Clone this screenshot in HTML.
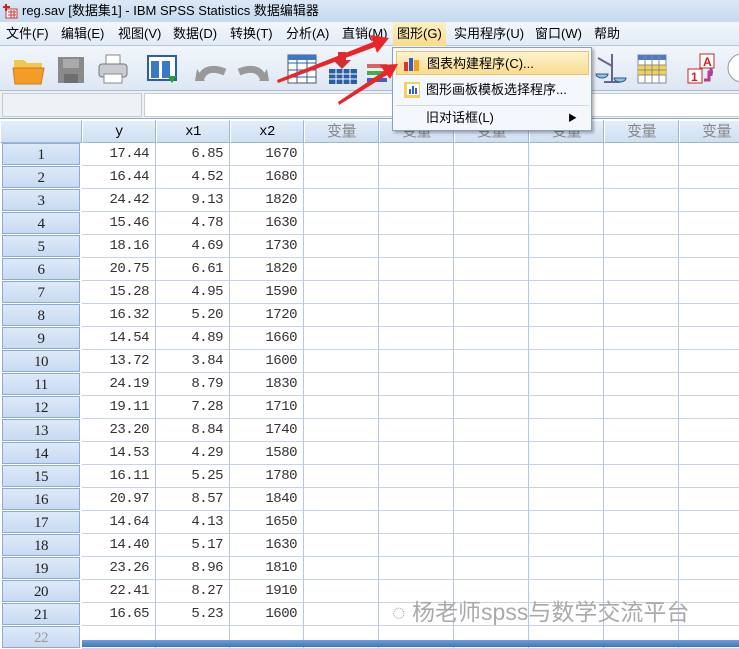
<!DOCTYPE html>
<html><head><meta charset="utf-8"><style>
*{margin:0;padding:0;box-sizing:border-box}
body{width:739px;height:647px;overflow:hidden;background:#fff;font-family:"Liberation Sans","Noto Sans CJK SC",sans-serif;position:relative}
.title{position:absolute;left:0;top:0;width:739px;height:22px;background:linear-gradient(#dbe8f6,#c6d9ee);font-size:13px;line-height:22px;padding-left:22px;color:#000}
.menu{position:absolute;left:0;top:22px;width:739px;height:24px;background:linear-gradient(#f3f7fc,#e2ebf6);border-bottom:1px solid #b6c8de;font-size:13px;line-height:24px}
.menu span{position:absolute;top:0}
.tool{position:absolute;left:0;top:46px;width:739px;height:45px;background:linear-gradient(#f2f6fb,#dde7f3);border-bottom:1px solid #a9bcd3}
.edit{position:absolute;left:0;top:91px;width:739px;height:28px;background:#f0f0f0;border-bottom:1px solid #8ea9c9}
.grid{position:absolute;left:0;top:120px}
.c{position:absolute;height:23px;border-right:1px solid #b5c8e0;border-bottom:1px solid #c5d4e6;font-family:"Liberation Mono","Noto Sans CJK SC",monospace;font-size:14px;line-height:22px;text-align:right;padding-right:6px;color:#333;letter-spacing:-0.5px}
.h{background:linear-gradient(#e4eefa,#cfdff2);text-align:center;padding:0;border:1px solid #fff;border-right-color:#9fb6d3;border-bottom-color:#9fb6d3;color:#000}
.r{background:linear-gradient(#dde9f8,#c8daf2);text-align:center;padding:0;border:1px solid #8eabd1;left:2px;width:78px;color:#222;font-family:"Liberation Serif",serif;font-size:15px}
.v{color:#888;font-family:"Liberation Sans","Noto Sans CJK SC",sans-serif;font-size:15px}
.dd{position:absolute;left:392px;top:47px;width:200px;height:84px;background:#f4f7fb;border:1px solid #8aa0bd;box-shadow:2px 2px 3px rgba(0,0,0,.3);font-size:13px}
.dd div{position:absolute;left:3px;width:193px;height:24px;line-height:24px;padding-left:30px}
</style></head><body>
<div class="title"><svg style="position:absolute;left:2px;top:3px" width="16" height="16"><rect x="4" y="6" width="11" height="9" fill="#fff" stroke="#c33"/><path d="M1 4h7M4 1v7" stroke="#c22" stroke-width="2"/><path d="M6 9h8M6 12h8M9 7v8M12 7v8" stroke="#c33"/></svg>reg.sav [数据集1] - IBM SPSS Statistics 数据编辑器</div>
<div class="menu">
<span style="left:6px">文件(F)</span><span style="left:61px">编辑(E)</span><span style="left:118px">视图(V)</span><span style="left:173px">数据(D)</span><span style="left:230px">转换(T)</span><span style="left:286px">分析(A)</span><span style="left:342px">直销(M)</span>
<span style="left:393px;width:53px;background:linear-gradient(#fdf0c4,#f8dc8a);padding-left:4px">图形(G)</span><span style="left:454px">实用程序(U)</span><span style="left:535px">窗口(W)</span><span style="left:594px">帮助</span></div>
<div class="tool">
<svg width="739" height="45">
<path d="M14 14h10l3 3h15v6H14z" fill="#f3c650"/><path d="M13 22h31l-3 16H15z" fill="#f39c28" stroke="#d07a10"/>
<rect x="58" y="11" width="26" height="26" fill="#8a8a8a"/><rect x="63" y="13" width="16" height="9" fill="#aaa"/><rect x="64" y="28" width="14" height="9" fill="#6e6e6e"/>
<rect x="106" y="9" width="14" height="10" fill="#fff" stroke="#888"/><rect x="99" y="18" width="28" height="13" rx="3" fill="#c8ccd2" stroke="#777"/><rect x="104" y="28" width="18" height="9" fill="#fff" stroke="#888"/>
<rect x="148" y="10" width="28" height="24" fill="#fff" stroke="#2a5ea8" stroke-width="2"/><rect x="151" y="15" width="8" height="17" fill="#3a78c8"/><rect x="162" y="15" width="8" height="17" fill="#3a78c8"/><path d="M167 30h10l-5 7z" fill="#2ca02c"/>
<path d="M200 34 q5 -16 25 -8" stroke="#999" stroke-width="7" fill="none"/><path d="M197 23l8 12h-10z" fill="#999"/>
<path d="M264 34 q-5 -16 -25 -8" stroke="#999" stroke-width="7" fill="none"/><path d="M267 23l-8 12h10z" fill="#999"/>
<rect x="288" y="9" width="28" height="28" fill="#fff" stroke="#555"/><path d="M288 17h28M288 24h28M288 31h28M297 9v28M307 9v28" stroke="#2a5ea8"/><rect x="288" y="9" width="28" height="5" fill="#3a78c8"/>
<rect x="329" y="23" width="28" height="15" fill="#2a5ea8"/><path d="M329 28h28M329 33h28M336 23v15M343 23v15M350 23v15" stroke="#fff"/><path d="M338 6h8v8h5l-9 9-9-9h5z" fill="#c33"/>
<rect x="367" y="18" width="20" height="4" fill="#e06060"/><rect x="367" y="25" width="20" height="4" fill="#40b040"/><rect x="367" y="32" width="20" height="4" fill="#4060d0"/>
<path d="M598 12l14 8M612 8v28M604 36h16" stroke="#668" stroke-width="2"/><path d="M596 28a6 4 0 0 0 12 0zM614 32a6 4 0 0 0 12 0z" fill="#8cc4e8" stroke="#357"/>
<rect x="638" y="9" width="28" height="28" fill="#fff" stroke="#889"/><rect x="638" y="9" width="28" height="5" fill="#4a7cc8"/><rect x="638" y="19" width="28" height="10" fill="#f2d350"/><path d="M638 19h28M638 24h28M638 29h28M645 9v28M652 9v28M659 9v28" stroke="#889"/>
<rect x="700" y="8" width="14" height="14" fill="#fff" stroke="#c22"/><text x="703" y="20" font-size="12" font-weight="bold" fill="#c22" font-family="Liberation Sans">A</text>
<rect x="688" y="23" width="14" height="14" fill="#fff" stroke="#c22"/><text x="691" y="35" font-size="12" font-weight="bold" fill="#c22" font-family="Liberation Sans">1</text>
<path d="M704 34h5v-8h4M711 22v8" stroke="#b04090" stroke-width="3" fill="none"/>
<circle cx="742" cy="22" r="14" fill="#fff" stroke="#999"/>
</svg></div>
<div class="edit"><div style="position:absolute;left:2px;top:2px;width:140px;height:24px;background:#eef1f5;border:1px solid #c5ccd6"></div><div style="position:absolute;left:144px;top:2px;width:600px;height:24px;background:#fff;border:1px solid #c5ccd6"></div></div>
<div class="grid">
<div class="c h" style="left:0;top:0;width:82px"></div>
<div class="c h" style="left:82px;top:0;width:74px">y</div><div class="c h" style="left:156px;top:0;width:74px">x1</div><div class="c h" style="left:230px;top:0;width:74px">x2</div>
<div class="c h v" style="left:304px;top:0;width:75px">变量</div><div class="c h v" style="left:379px;top:0;width:75px">变量</div><div class="c h v" style="left:454px;top:0;width:75px">变量</div><div class="c h v" style="left:529px;top:0;width:75px">变量</div><div class="c h v" style="left:604px;top:0;width:75px">变量</div><div class="c h v" style="left:679px;top:0;width:75px">变量</div>
</div>
<div id="rows" class="grid"></div>
<script>
var d=[["17.44","6.85","1670"],["16.44","4.52","1680"],["24.42","9.13","1820"],["15.46","4.78","1630"],["18.16","4.69","1730"],["20.75","6.61","1820"],["15.28","4.95","1590"],["16.32","5.20","1720"],["14.54","4.89","1660"],["13.72","3.84","1600"],["24.19","8.79","1830"],["19.11","7.28","1710"],["23.20","8.84","1740"],["14.53","4.29","1580"],["16.11","5.25","1780"],["20.97","8.57","1840"],["14.64","4.13","1650"],["14.40","5.17","1630"],["23.26","8.96","1810"],["22.41","8.27","1910"],["16.65","5.23","1600"]];
var h="",L=[82,156,230,304,379,454,529,604,679],W=[74,74,74,75,75,75,75,75,75];
for(var i=0;i<22;i++){var t=23+i*23;h+='<div class="c r" style="top:'+t+'px;height:22px'+(i==21?';color:#999':'')+'">'+(i+1)+'</div>';
for(var j=0;j<9;j++){h+='<div class="c" style="left:'+L[j]+'px;top:'+t+'px;width:'+W[j]+'px">'+(i<21&&j<3?d[i][j]:'')+'</div>';}}
document.getElementById('rows').innerHTML=h;
</script>
<div style="position:absolute;left:82px;top:640px;width:657px;height:7px;background:linear-gradient(#6fa0d8,#3d74c0)"></div>
<div style="position:absolute;left:392px;top:593px;font-size:23px;color:#aaa">◌ 杨老师spss与数学交流平台</div>
<div class="dd">
<div style="top:3px;background:linear-gradient(#fdf3cf,#f9dc8e);border:1px solid #e8c56a">图表构建程序(C)...</div>
<div style="top:30px">图形画板模板选择程序...</div>
<div style="top:57px;border-top:1px solid #d0d8e2">旧对话框(L)<span style="position:absolute;right:12px;font-size:9px">▶</span></div>
<svg style="position:absolute;left:10px;top:6px" width="18" height="18"><rect x="1" y="8" width="4" height="9" fill="#e03030"/><rect x="6" y="4" width="4" height="13" fill="#3060c0"/><rect x="11" y="6" width="5" height="11" fill="#f0a020"/></svg>
<svg style="position:absolute;left:10px;top:33px" width="18" height="18"><rect x="1" y="1" width="16" height="16" fill="#f3d060"/><rect x="4" y="3" width="12" height="11" fill="#fff"/><rect x="6" y="8" width="2" height="5" fill="#3060c0"/><rect x="9" y="5" width="2" height="8" fill="#3060c0"/><rect x="12" y="7" width="2" height="6" fill="#3060c0"/></svg>
</div>
<svg style="position:absolute;left:0;top:0" width="739" height="647"><g fill="#e8262a"><path d="M277 80l96-38-3-7 19 3-12 15-2-6-97 36z"/><path d="M338 102l46-31-4-6 18-1-8 15-3-4-48 30z"/></g></svg>
</body></html>
